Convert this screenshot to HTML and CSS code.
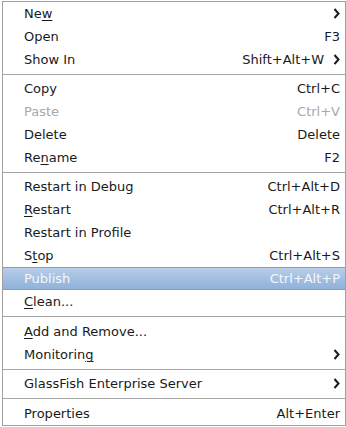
FILE: index.html
```html
<!DOCTYPE html>
<html>
<head>
<meta charset="utf-8">
<link rel="stylesheet" href="styles.css">
</head>
<body>
<div class="menu">
  <div class="item"><span class="label">Ne<u>w</u></span><span class="arrow"><svg width="7" height="11" viewBox="0 0 7 11"><polyline points="1.5,1 5.5,5.5 1.5,10" fill="none" stroke="#1a1a1a" stroke-width="2"/></svg></span></div>
  <div class="item"><span class="label">Open</span><span class="key">F3</span></div>
  <div class="item"><span class="label">Show In</span><span class="key">Shift+Alt+W</span><span class="arrow"><svg width="7" height="11" viewBox="0 0 7 11"><polyline points="1.5,1 5.5,5.5 1.5,10" fill="none" stroke="#1a1a1a" stroke-width="2"/></svg></span></div>
  <div class="sep"></div>
  <div class="item"><span class="label">Copy</span><span class="key">Ctrl+C</span></div>
  <div class="item disabled"><span class="label">Paste</span><span class="key">Ctrl+V</span></div>
  <div class="item"><span class="label">Delete</span><span class="key">Delete</span></div>
  <div class="item"><span class="label">Re<u>n</u>ame</span><span class="key">F2</span></div>
  <div class="sep"></div>
  <div class="item"><span class="label">Restart in Debug</span><span class="key">Ctrl+Alt+D</span></div>
  <div class="item"><span class="label"><u>R</u>estart</span><span class="key">Ctrl+Alt+R</span></div>
  <div class="item"><span class="label">Restart in Profile</span></div>
  <div class="item"><span class="label">S<u>t</u>op</span><span class="key">Ctrl+Alt+S</span></div>
  <div class="item active"><span class="label">Publish</span><span class="key">Ctrl+Alt+P</span></div>
  <div class="item"><span class="label"><u>C</u>lean...</span></div>
  <div class="sep tall"></div>
  <div class="item"><span class="label"><u>A</u>dd and Remove...</span></div>
  <div class="item"><span class="label">Monitorin<u>g</u></span><span class="arrow"><svg width="7" height="11" viewBox="0 0 7 11"><polyline points="1.5,1 5.5,5.5 1.5,10" fill="none" stroke="#1a1a1a" stroke-width="2"/></svg></span></div>
  <div class="sep"></div>
  <div class="item"><span class="label">GlassFish Enterprise Server</span><span class="arrow"><svg width="7" height="11" viewBox="0 0 7 11"><polyline points="1.5,1 5.5,5.5 1.5,10" fill="none" stroke="#1a1a1a" stroke-width="2"/></svg></span></div>
  <div class="sep tall"></div>
  <div class="item"><span class="label">Properties</span><span class="key">Alt+Enter</span></div>
</div>
</body>
</html>
```

FILE: styles.css
```css
html, body {
  margin: 0;
  padding: 0;
  background: #ffffff;
}
body {
  width: 346px;
  height: 427px;
  overflow: hidden;
  font-family: "DejaVu Sans", "Liberation Sans", sans-serif;
  font-size: 13px;
  color: #1a1a1a;
}
.menu {
  margin: 1px 0 0 2px;
  width: 342px;
  border: 1px solid #a0a0a0;
  background: #ffffff;
  display: flex;
  flex-direction: column;
}
.item {
  height: 23px;
  display: flex;
  align-items: center;
  padding: 0 5px 0 21px;
  box-sizing: border-box;
}
.label {
  flex: 1;
  white-space: nowrap;
}
.key {
  white-space: nowrap;
}
.arrow {
  width: 12px;
  display: flex;
  justify-content: flex-end;
  align-items: center;
}
.key + .arrow {
  width: 16px;
}
u {
  text-decoration-thickness: 1px;
  text-underline-offset: 2px;
}
.disabled {
  color: #a8a8a8;
}
.active {
  background: linear-gradient(#b8cde8, #8fb1da);
  border-top: 1px solid #7f9fcb;
  border-bottom: 1px solid #7f9fcb;
  color: #f4f7fc;
}
.sep {
  height: 6px;
  display: flex;
  align-items: center;
}
.sep.tall {
  height: 7px;
}
.sep::before {
  content: "";
  display: block;
  width: 100%;
  height: 1px;
  background: #a6a6a6;
}
```
